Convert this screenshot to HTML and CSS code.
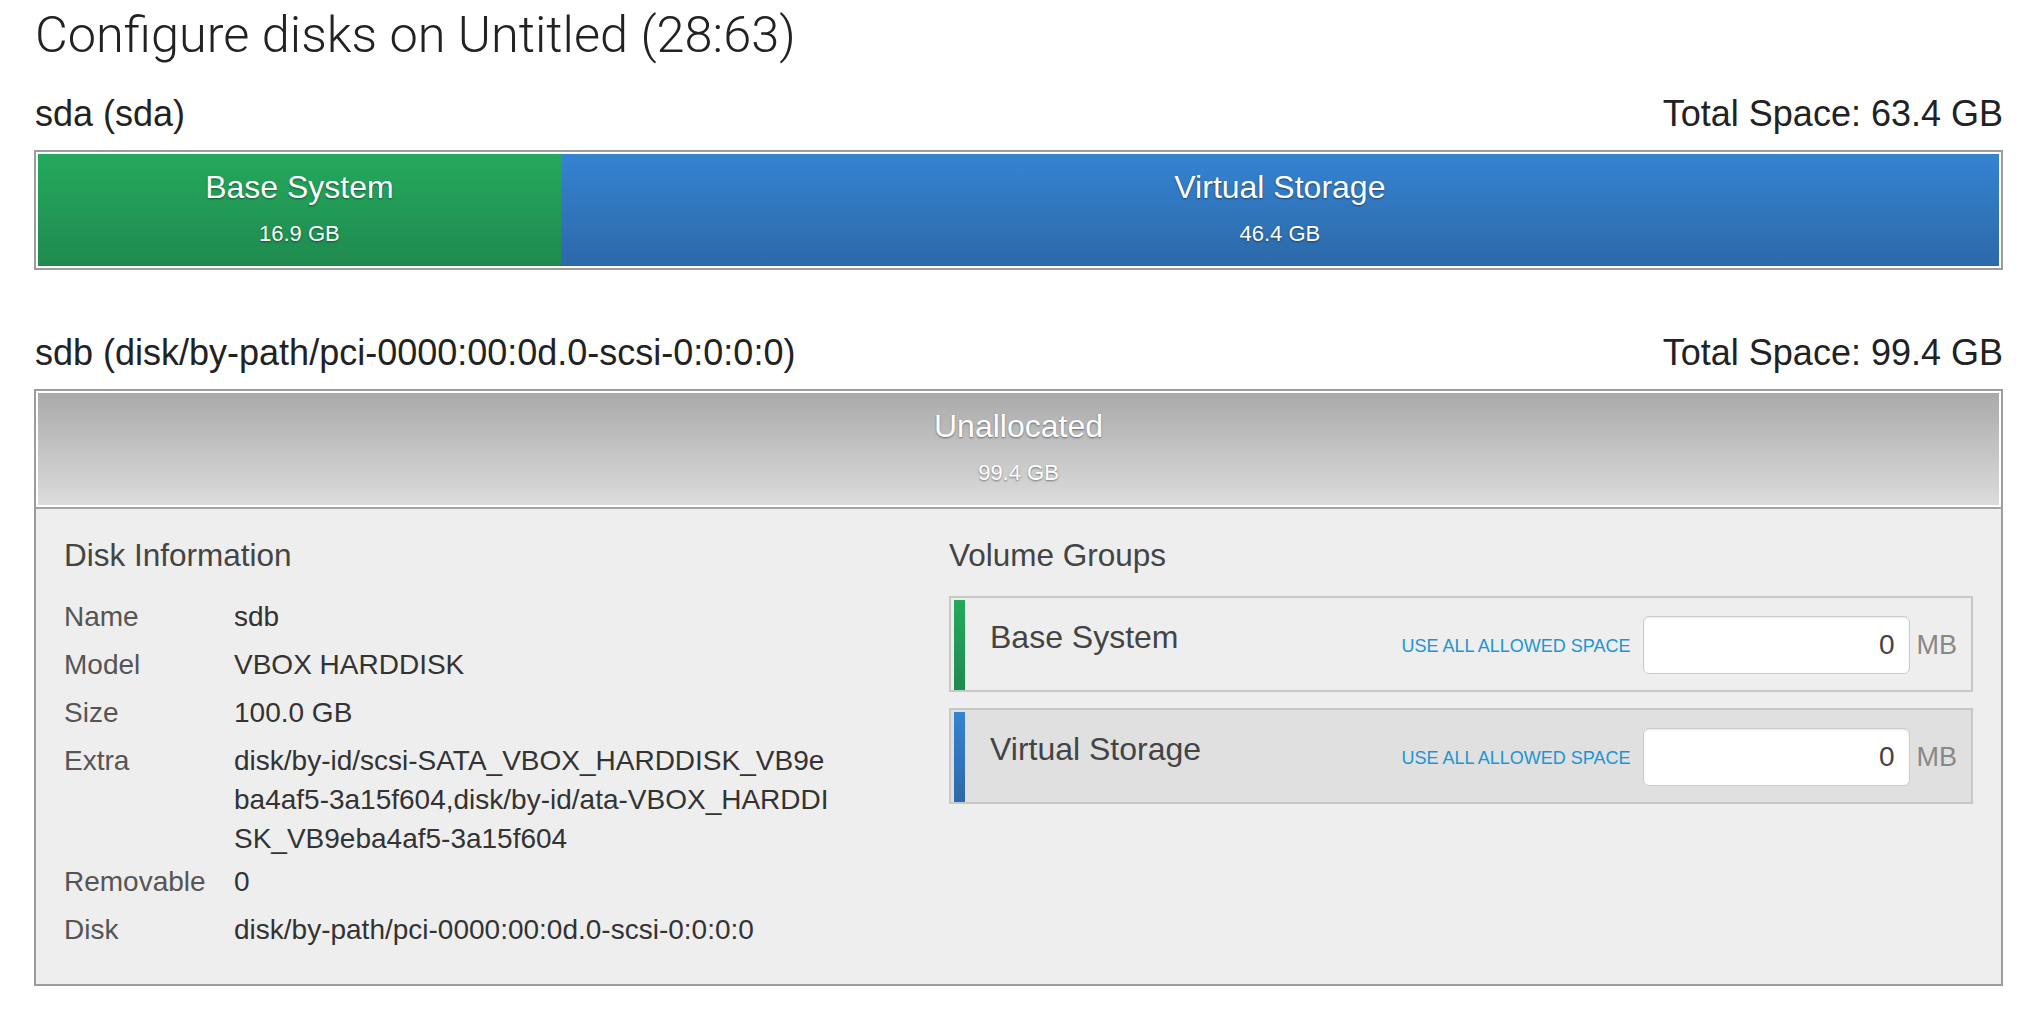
FILE: index.html
```html
<!DOCTYPE html>
<html>
<head>
<meta charset="utf-8">
<link rel="stylesheet" href="styles.css">
</head>
<body>
<main class="page">
  <h1 class="title">Configure disks on Untitled (28:63)</h1>

  <section class="disk">
    <div class="disk-head">
      <span>sda (sda)</span>
      <span>Total Space: 63.4 GB</span>
    </div>
    <div class="disk-box">
      <div class="bars">
        <div class="seg seg-green" style="width:26.66%">
          <div class="seg-name">Base System</div>
          <div class="seg-size">16.9 GB</div>
        </div>
        <div class="seg seg-blue" style="width:73.34%">
          <div class="seg-name">Virtual Storage</div>
          <div class="seg-size">46.4 GB</div>
        </div>
      </div>
    </div>
  </section>

  <section class="disk disk-second">
    <div class="disk-head">
      <span>sdb (disk/by-path/pci-0000:00:0d.0-scsi-0:0:0:0)</span>
      <span>Total Space: 99.4 GB</span>
    </div>
    <div class="disk-box">
      <div class="bars">
        <div class="seg seg-gray" style="width:100%">
          <div class="seg-name">Unallocated</div>
          <div class="seg-size">99.4 GB</div>
        </div>
      </div>
      <div class="details">
        <div class="info">
          <h2 class="sub">Disk Information</h2>
          <table class="info-table">
            <tr><th>Name</th><td>sdb</td></tr>
            <tr><th>Model</th><td>VBOX HARDDISK</td></tr>
            <tr><th>Size</th><td>100.0 GB</td></tr>
            <tr><th>Extra</th><td>disk/by-id/scsi-SATA_VBOX_HARDDISK_VB9eba4af5-3a15f604,disk/by-id/ata-VBOX_HARDDISK_VB9eba4af5-3a15f604</td></tr>
            <tr><th>Removable</th><td>0</td></tr>
            <tr><th>Disk</th><td>disk/by-path/pci-0000:00:0d.0-scsi-0:0:0:0</td></tr>
          </table>
        </div>
        <div class="groups">
          <h2 class="sub">Volume Groups</h2>
          <div class="vg">
            <span class="vg-mark vg-mark-green"></span>
            <span class="vg-name">Base System</span>
            <a class="vg-link">USE ALL ALLOWED SPACE</a>
            <input class="vg-input" type="text" value="0">
            <span class="vg-unit">MB</span>
          </div>
          <div class="vg vg-active">
            <span class="vg-mark vg-mark-blue"></span>
            <span class="vg-name">Virtual Storage</span>
            <a class="vg-link">USE ALL ALLOWED SPACE</a>
            <input class="vg-input" type="text" value="0">
            <span class="vg-unit">MB</span>
          </div>
        </div>
      </div>
    </div>
  </section>
</main>
</body>
</html>
```

FILE: styles.css
```css
* { box-sizing: border-box; }

html, body {
  margin: 0;
  padding: 0;
  background: #ffffff;
}

body {
  font-family: "Liberation Sans", Arial, sans-serif;
  color: #222222;
}

.page {
  margin: 0 17px 0 34px;
}

.title {
  margin: 6px 0 0 1px;
  font-family: Roboto, "Liberation Sans", sans-serif;
  font-weight: 300;
  font-size: 50.5px;
  line-height: 58px;
  color: #222222;
}

.disk {
  margin-top: 30px;
}

.disk-second {
  margin-top: 63px;
}

.disk-head {
  display: flex;
  justify-content: space-between;
  align-items: center;
  font-size: 36px;
  line-height: 40px;
  color: #222222;
  padding-left: 1px;
  margin-bottom: 16px;
}

.disk-box {
  border: 2px solid #9c9c9c;
}

.bars {
  display: flex;
  padding: 2px;
  background: #ffffff;
}

.seg {
  height: 112px;
  padding-top: 15px;
  text-align: center;
  color: #ffffff;
  text-shadow: 0 1px 2px rgba(0, 0, 0, 0.45);
}

.seg-green {
  background: linear-gradient(to bottom, #24a95d, #1f8a4f);
}

.seg-blue {
  background: linear-gradient(to bottom, #3583d2, #2c69a8);
}

.seg-gray {
  background: linear-gradient(to bottom, #aaaaaa, #dcdcdc);
}

.seg-name {
  font-size: 32px;
  line-height: 36px;
}

.seg-size {
  margin-top: 16px;
  font-size: 22px;
  line-height: 26px;
}

.details {
  border-top: 2px solid #a4a4a4;
  background: #eeeeee;
  padding: 26px 28px 30px 28px;
  display: grid;
  grid-template-columns: 855px 1fr;
  column-gap: 30px;
}

.sub {
  margin: 0 0 18px 0;
  font-weight: normal;
  font-size: 31.5px;
  line-height: 40px;
  color: #444444;
}

.info-table {
  border-collapse: collapse;
  font-size: 28px;
}

.info-table th {
  width: 170px;
  padding: 4px 0;
  line-height: 40px;
  text-align: left;
  vertical-align: top;
  font-weight: normal;
  color: #555555;
}

.info-table td {
  width: 600px;
  padding: 4px 0 0 0;
  line-height: 39px;
  vertical-align: top;
  color: #333333;
  word-break: break-all;
}

.groups .sub {
  margin-bottom: 21px;
}

.vg {
  display: flex;
  align-items: center;
  height: 96px;
  border: 2px solid #c8c8c8;
  background: #eeeeee;
  padding: 2px 14px 0 3px;
  margin-bottom: 16px;
}

.vg-active {
  background: #e0e0e0;
}

.vg-mark {
  align-self: stretch;
  width: 11px;
}

.vg-mark-green {
  background: linear-gradient(to bottom, #24a95d, #1f8a4f);
}

.vg-mark-blue {
  background: linear-gradient(to bottom, #3583d2, #2c69a8);
}

.vg-name {
  flex: 1;
  margin-left: 25px;
  margin-top: -16px;
  font-size: 32px;
  color: #444444;
}

.vg-link {
  font-size: 18px;
  color: #1a96d4;
  margin-right: 12px;
  margin-top: 2px;
}

.vg-input {
  width: 267px;
  height: 58px;
  border: 1px solid #cccccc;
  border-radius: 6px;
  box-shadow: inset 0 1px 2px rgba(0, 0, 0, 0.1);
  background: #ffffff;
  font-family: "Liberation Sans", Arial, sans-serif;
  font-size: 28px;
  color: #444444;
  text-align: right;
  padding: 0 14px;
  margin-top: 0;
}

.vg-unit {
  margin-left: 7px;
  font-size: 27px;
  color: #888888;
}
```
